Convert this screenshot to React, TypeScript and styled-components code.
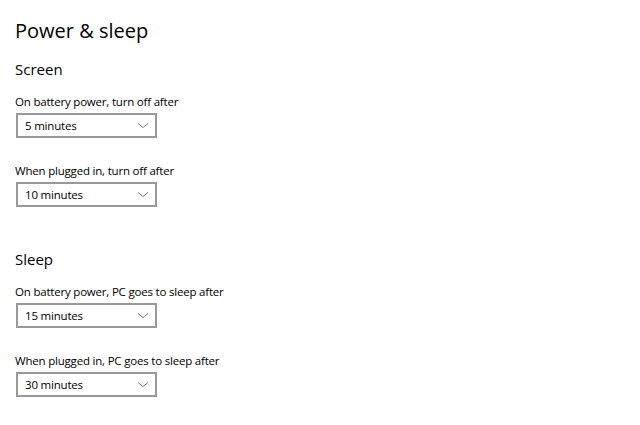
import React from 'react'
import styled, { createGlobalStyle } from 'styled-components'

const GlobalStyle = createGlobalStyle`
	html, body {
		margin: 0;
		padding: 0;
		background: #fff;
	}
	body {
		font-family: 'Open Sans', 'Noto Sans', sans-serif;
		color: #000;
	}
`

const Page = styled.div`
	width: 640px;
	height: 425px;
	box-sizing: border-box;
	padding: 16px 15px 0;
	display: flex;
	flex-direction: column;
`

const Title = styled.h1`
	margin: 0;
	font-size: 20px;
	font-weight: 400;
	line-height: 30px;
`

const Section = styled.section`
	display: flex;
	flex-direction: column;
	margin-top: ${(p: { $gap: number }) => p.$gap}px;
`

const SectionTitle = styled.h2`
	margin: 0;
	font-size: 15px;
	font-weight: 400;
	line-height: 22px;
`

const Field = styled.div`
	display: flex;
	flex-direction: column;
	margin-top: ${(p: { $gap: number }) => p.$gap}px;
`

const Label = styled.label`
	font-size: 11.5px;
	letter-spacing: -0.2px;
	line-height: 18px;
`

const Select = styled.div`
	margin: 2px 0 0 1px;
	width: 141px;
	height: 25px;
	box-sizing: border-box;
	border: 2px solid #999;
	display: flex;
	align-items: center;
	justify-content: space-between;
	padding: 0 6px 0 7px;
	font-size: 11.5px;
	letter-spacing: -0.2px;
`

const Chevron = () => (
	<svg width="12" height="7" viewBox="0 0 12 7">
		<path d="M1 1.5 L6 5.5 L11 1.5" fill="none" stroke="#808080" strokeWidth="1" />
	</svg>
)

const Dropdown = ({ value }: { value: string }) => (
	<Select>
		<span>{value}</span>
		<Chevron />
	</Select>
)

const sections = [
	{
		title: 'Screen',
		gap: 12,
		fields: [
			{ label: 'On battery power, turn off after', value: '5 minutes' },
			{ label: 'When plugged in, turn off after', value: '10 minutes' },
		],
	},
	{
		title: 'Sleep',
		gap: 41,
		fields: [
			{ label: 'On battery power, PC goes to sleep after', value: '15 minutes' },
			{ label: 'When plugged in, PC goes to sleep after', value: '30 minutes' },
		],
	},
]

export default function App() {
	return (
		<Page>
			<GlobalStyle />
			<Title>Power &amp; sleep</Title>
			{sections.map((s) => (
				<Section key={s.title} $gap={s.gap}>
					<SectionTitle>{s.title}</SectionTitle>
					{s.fields.map((f, k) => (
						<Field key={k} $gap={k === 0 ? 13 : 24}>
							<Label>{f.label}</Label>
							<Dropdown value={f.value} />
						</Field>
					))}
				</Section>
			))}
		</Page>
	)
}
